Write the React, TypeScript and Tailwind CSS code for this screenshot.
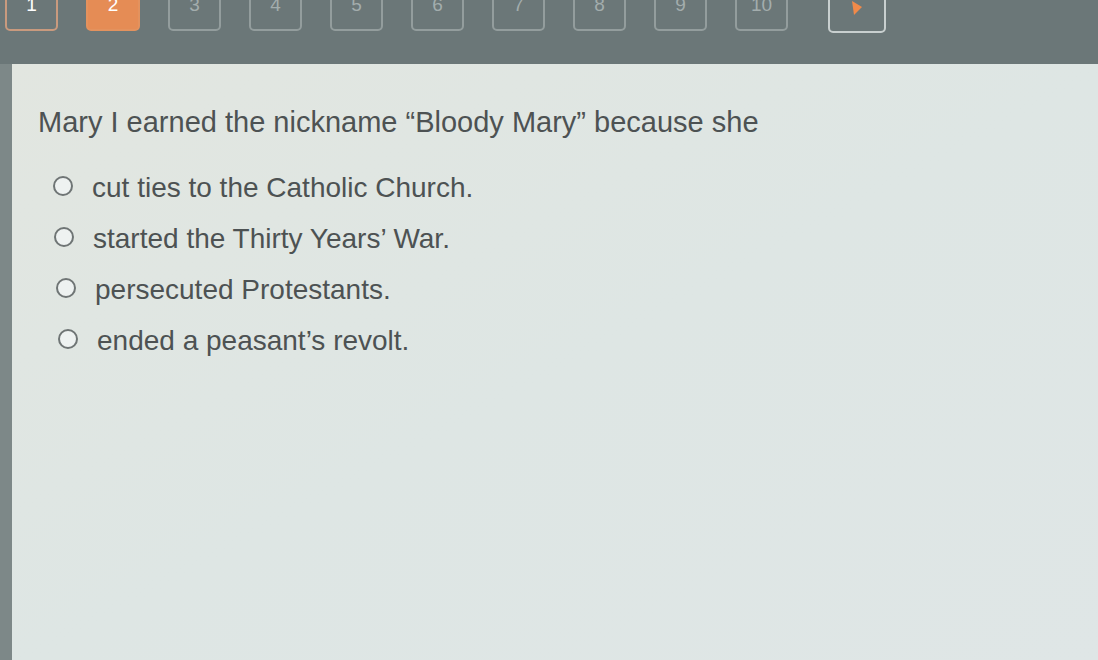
import React from "react";

const pages = ["1", "2", "3", "4", "5", "6", "7", "8", "9", "10"];

const choices = [
  { text: "cut ties to the Catholic Church.", indent: "pl-[15px]" },
  { text: "started the Thirty Years\u2019 War.", indent: "pl-[16px]" },
  { text: "persecuted Protestants.", indent: "pl-[18px]" },
  { text: "ended a peasant\u2019s revolt.", indent: "pl-[20px]" },
];

function PageButton({ label, index }: { label: string; index: number }) {
  const visited = index === 0;
  const current = index === 1;
  return (
    <div
      className={
        current
          ? "flex h-[44px] w-[54px] shrink-0 items-start justify-center rounded-[5px] border-2 border-[#e3925e] bg-[#e58c55] pt-[6px] text-[19px] leading-none text-white"
          : visited
            ? "flex h-[44px] w-[53px] shrink-0 items-start justify-center rounded-[5px] border-2 border-[#c99a7e] pt-[6px] text-[19px] leading-none text-white"
            : "flex h-[44px] w-[53px] shrink-0 items-start justify-center rounded-[5px] border-2 border-[#939d9d] pt-[6px] text-[19px] leading-none text-[#a3adad]"
      }
    >
      {label}
    </div>
  );
}

export default function App() {
  return (
    <div
      className="flex h-[660px] w-[1098px] flex-col overflow-hidden bg-[#6b7778]"
      style={{ fontFamily: '"Liberation Sans", Arial, sans-serif' }}
    >
      {/* question pager */}
      <div className="h-[64px] shrink-0">
        <div className="-mt-[13px] flex items-start gap-[28px] pl-[5px]">
          {pages.map((p, i) => (
            <PageButton key={p} label={p} index={i} />
          ))}
          <div className="ml-[12px] flex h-[46px] w-[58px] shrink-0 items-start justify-center rounded-[5px] border-2 border-[#c8cfcf] pt-[12px]">
            <svg width="12" height="14" viewBox="0 0 12 14">
              <path d="M1 0 L11 6 L3 14 Z" fill="#f08a4a" />
            </svg>
          </div>
        </div>
      </div>

      {/* question body */}
      <div className="flex min-h-0 flex-1">
        <div className="w-[12px] shrink-0 bg-[#7d8888]" />
        <div className="flex-1 bg-gradient-to-br from-[#e2e6e0] via-[#dee6e4] to-[#dfe6e6] pl-[26px] pt-[41px] text-[#4d5253]">
          <p className="text-[29px] leading-[34px]">
            Mary I earned the nickname &ldquo;Bloody Mary&rdquo; because she
          </p>
          <div className="mt-[32px] flex flex-col gap-[18px]">
            {choices.map((c) => (
              <label key={c.text} className={"flex items-center gap-[19px] " + c.indent}>
                <span className="-mt-[4px] h-[20px] w-[20px] shrink-0 rounded-full border-[2.5px] border-[#6f7575] bg-[#eef2f1]" />
                <span className="text-[28px] leading-[33px]">{c.text}</span>
              </label>
            ))}
          </div>
        </div>
      </div>
    </div>
  );
}
